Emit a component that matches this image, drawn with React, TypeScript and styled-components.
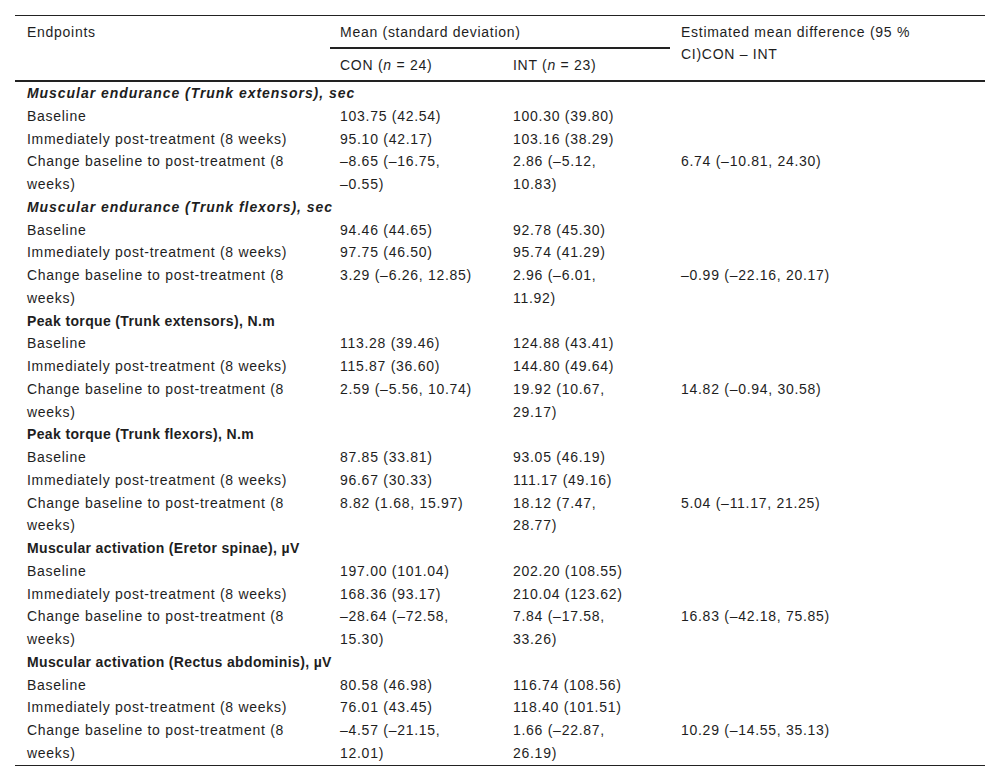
import styled, { createGlobalStyle } from "styled-components";

const GlobalStyle = createGlobalStyle`
  body {
    margin: 0;
    background: #fff;
    font-family: "Liberation Sans", Arial, sans-serif;
    color: #1e1e1e;
  }
`;

const Page = styled.div`
  padding: 15px;
  width: 970px;
`;

const Table = styled.table`
  width: 970px;
  table-layout: fixed;
  border-collapse: separate;
  border-spacing: 0;
  font-size: 14px;
  letter-spacing: 0.72px;
`;

// left/right padding per column, so the text wraps where the print does
const pads = [
  "0 18px 0 12px",
  "0 23px 0 10px",
  "0 37px 0 10px",
  "0 49px 0 11px",
];

const HeadCell = styled.th<{ $col: number; $top?: boolean }>`
  font-weight: normal;
  text-align: left;
  vertical-align: top;
  line-height: 22px;
  padding: ${(p) => pads[p.$col]};
  padding-top: 4.5px;
  padding-bottom: 4.5px;
  border-top: ${(p) => (p.$top ? "1px solid #222" : "none")};
  border-bottom: 2px solid #222;
`;

const Cell = styled.td<{ $col: number }>`
  vertical-align: top;
  line-height: 22.75px;
  padding: ${(p) => pads[p.$col]};
`;

const SectionCell = styled.td<{ $italic?: boolean }>`
  font-weight: bold;
  font-style: ${(p) => (p.$italic ? "italic" : "normal")};
  letter-spacing: ${(p) => (p.$italic ? "0.95px" : "0.36px")};
  line-height: 22.75px;
  padding: 0 0 0 12px;
`;

const LastRow = styled.tr`
  td {
    border-bottom: 1px solid #222;
  }
`;

type Section = {
  title: string;
  italic?: boolean;
  base: [string, string];
  post: [string, string];
  change: [string, string];
  diff: string;
};

const sections: Section[] = [
  {
    title: "Muscular endurance (Trunk extensors), sec",
    italic: true,
    base: ["103.75 (42.54)", "100.30 (39.80)"],
    post: ["95.10 (42.17)", "103.16 (38.29)"],
    change: ["–8.65 (–16.75, –0.55)", "2.86 (–5.12, 10.83)"],
    diff: "6.74 (–10.81, 24.30)",
  },
  {
    title: "Muscular endurance (Trunk flexors), sec",
    italic: true,
    base: ["94.46 (44.65)", "92.78 (45.30)"],
    post: ["97.75 (46.50)", "95.74 (41.29)"],
    change: ["3.29 (–6.26, 12.85)", "2.96 (–6.01, 11.92)"],
    diff: "–0.99 (–22.16, 20.17)",
  },
  {
    title: "Peak torque (Trunk extensors), N.m",
    base: ["113.28 (39.46)", "124.88 (43.41)"],
    post: ["115.87 (36.60)", "144.80 (49.64)"],
    change: ["2.59 (–5.56, 10.74)", "19.92 (10.67, 29.17)"],
    diff: "14.82 (–0.94, 30.58)",
  },
  {
    title: "Peak torque (Trunk flexors), N.m",
    base: ["87.85 (33.81)", "93.05 (46.19)"],
    post: ["96.67 (30.33)", "111.17 (49.16)"],
    change: ["8.82 (1.68, 15.97)", "18.12 (7.47, 28.77)"],
    diff: "5.04 (–11.17, 21.25)",
  },
  {
    title: "Muscular activation (Eretor spinae), µV",
    base: ["197.00 (101.04)", "202.20 (108.55)"],
    post: ["168.36 (93.17)", "210.04 (123.62)"],
    change: ["–28.64 (–72.58, 15.30)", "7.84 (–17.58, 33.26)"],
    diff: "16.83 (–42.18, 75.85)",
  },
  {
    title: "Muscular activation (Rectus abdominis), µV",
    base: ["80.58 (46.98)", "116.74 (108.56)"],
    post: ["76.01 (43.45)", "118.40 (101.51)"],
    change: ["–4.57 (–21.15, 12.01)", "1.66 (–22.87, 26.19)"],
    diff: "10.29 (–14.55, 35.13)",
  },
];

// no line break right after a minus sign, only at spaces
const num = (s: string) => s.replace(/–/g, "–\u2060");

const App = () => {
  return (
    <Page>
      <GlobalStyle />
      <Table>
        <colgroup>
          <col style={{ width: 315 }} />
          <col style={{ width: 173 }} />
          <col style={{ width: 167 }} />
          <col style={{ width: 315 }} />
        </colgroup>
        <thead>
          <tr>
            <HeadCell $col={0} $top rowSpan={2}>Endpoints</HeadCell>
            <HeadCell $col={1} $top colSpan={2}>Mean (standard deviation)</HeadCell>
            <HeadCell $col={3} $top rowSpan={2}>
              Estimated mean difference (95 % CI)CON – INT
            </HeadCell>
          </tr>
          <tr>
            <HeadCell $col={1}>CON (<i>n</i> = 24)</HeadCell>
            <HeadCell $col={2}>INT (<i>n</i> = 23)</HeadCell>
          </tr>
        </thead>
        <tbody>
          {sections.map((s, i) => {
            const ChangeRow = i === sections.length - 1 ? LastRow : "tr";
            return [
              <tr key={s.title}>
                <SectionCell colSpan={4} $italic={s.italic}>{s.title}</SectionCell>
              </tr>,
              <tr key={s.title + "b"}>
                <Cell $col={0}>Baseline</Cell>
                <Cell $col={1}>{num(s.base[0])}</Cell>
                <Cell $col={2}>{num(s.base[1])}</Cell>
                <Cell $col={3}></Cell>
              </tr>,
              <tr key={s.title + "p"}>
                <Cell $col={0}>Immediately post-treatment (8 weeks)</Cell>
                <Cell $col={1}>{num(s.post[0])}</Cell>
                <Cell $col={2}>{num(s.post[1])}</Cell>
                <Cell $col={3}></Cell>
              </tr>,
              <ChangeRow key={s.title + "c"}>
                <Cell $col={0}>Change baseline to post-treatment (8 weeks)</Cell>
                <Cell $col={1}>{num(s.change[0])}</Cell>
                <Cell $col={2}>{num(s.change[1])}</Cell>
                <Cell $col={3}>{num(s.diff)}</Cell>
              </ChangeRow>,
            ];
          })}
        </tbody>
      </Table>
    </Page>
  );
};

export default App;
